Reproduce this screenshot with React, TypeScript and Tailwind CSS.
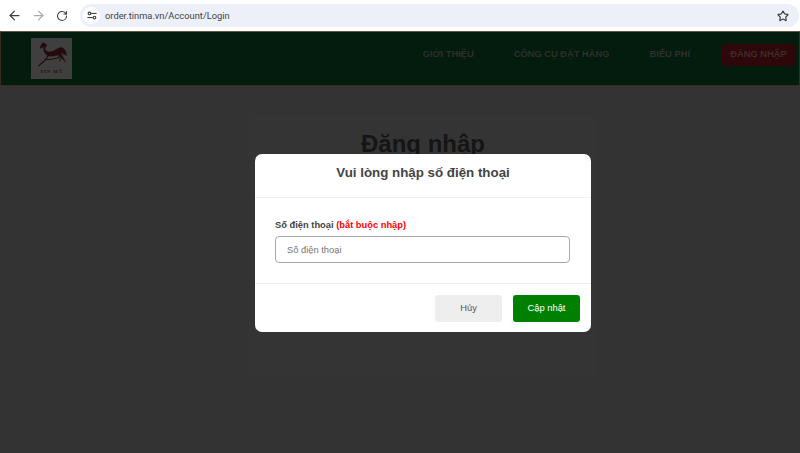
import { ArrowLeft, ArrowRight, RotateCw, Star } from "lucide-react";

function Horse() {
  return (
    <svg viewBox="0 0 30 25" className="w-[30px] h-[25px]" fill="none" stroke="#240a0e" strokeLinecap="round" strokeLinejoin="round">
      <path d="M6 0.5 L8.5 2 L10 3.5 Q8.5 4.5 8 6.5 Q8.5 9.5 12 10 Q17 9.5 20 7 Q23 4.5 26 6 Q29 8 29.5 14 L28 11.5 L27 13 Q26 10 24 11 Q24.5 13 26 15 L28.5 20 L24 15.5 L21.5 13 Q16 14.5 11 14 Q8 12.5 7 9 L6.5 5 L3 6.5 L3.5 4.5 Z" fill="#240a0e" strokeWidth="0.4" />
      <path d="M11 14 Q9 18 6 20 L1.5 24" strokeWidth="1.1" />
      <path d="M8 17.5 Q14 18.5 22 15.5" strokeWidth="1" />
      <path d="M22 14 Q24.5 16 23 19" strokeWidth="0.9" />
    </svg>
  );
}

function SiteInfo() {
  return (
    <svg viewBox="0 0 12 10" className="w-[10px] h-[9px]" fill="none" stroke="#3c4043" strokeWidth="1.3">
      <circle cx="3" cy="2.5" r="1.6" />
      <path d="M5 2.5 H11.5" />
      <circle cx="9" cy="7.5" r="1.6" />
      <path d="M0.5 7.5 H7" />
    </svg>
  );
}

export default function App() {
  return (
    <div className="relative w-[800px] h-[453px] overflow-hidden bg-[#333333] font-['Liberation_Sans',sans-serif]">
      <div className="h-[31px] bg-white flex items-center pl-[7px] pr-[1px]">
        <ArrowLeft size={15} strokeWidth={2} className="text-[#3c4043]" />
        <ArrowRight size={15} strokeWidth={2} className="text-[#a9acb0] ml-[9px]" />
        <RotateCw size={12} strokeWidth={2.2} className="text-[#3c4043] ml-[10px]" />
        <div className="ml-[12px] flex-1 h-[23px] rounded-full bg-[#edf0f9] flex items-center pl-[3px] pr-[10px]">
          <div className="w-[17px] h-[17px] rounded-full bg-white flex items-center justify-center">
            <SiteInfo />
          </div>
          <span className="ml-[5px] text-[9.33px] text-[#3f4347] font-['Roboto',sans-serif]">
            order.tinma.vn/Account/Login
          </span>
          <Star size={12} strokeWidth={2.4} className="ml-auto text-[#3c4043]" />
        </div>
      </div>

      <nav className="h-[55px] bg-[#041c0e] border border-[#3d2a1c] border-t-[#6a5443] flex items-center pl-[30px] pr-[4px]">
        <div className="w-[41px] h-[41px] bg-[#403f3f] flex flex-col items-center pt-[4px]">
          <Horse />
          <span className="mt-[2px] text-[4.6px] leading-[5px] font-bold text-[#240a0e] font-['Liberation_Serif',serif] tracking-[0.9px] whitespace-nowrap">TÍN MÃ</span>
        </div>
        <div className="ml-auto mb-[8px] flex items-center text-[9.33px] font-bold text-[#2e2f2d]">
          <span>GIỚI THIỆU</span>
          <span className="ml-[40px]">CÔNG CỤ ĐẶT HÀNG</span>
          <span className="ml-[40px]">BIỂU PHÍ</span>
          <span className="ml-[32px] w-[73px] h-[22px] rounded-[3px] bg-[#2d0709] flex items-center justify-center text-[#3c2d2e]">
            ĐĂNG NHẬP
          </span>
        </div>
      </nav>

      <main className="flex justify-center pt-[29px] pl-[46px]">
        <div className="w-[348px] h-[260px] bg-[#343434] text-center">
          <h1 className="mt-[15px] text-[24px] leading-[28px] font-bold text-[#151515]">Đăng nhập</h1>
        </div>
      </main>

      <div className="absolute left-[255px] top-[154px] w-[336px] h-[178px] rounded-[7px] bg-white flex flex-col">
        <div className="h-[44px] border-b border-[#f0f0f0] text-center pt-[9px] text-[13.33px] leading-[20px] font-bold text-[#444444]">
          Vui lòng nhập số điện thoại
        </div>
        <div className="h-[86px] border-b border-[#eeeeee] px-[20px] pt-[20px]">
          <div className="text-[9.33px] leading-[14px] font-bold text-[#444444]">
            Số điện thoại <span className="text-[#ff0000]">(bắt buộc nhập)</span>
          </div>
          <input
            readOnly
            placeholder="Số điện thoại"
            className="mt-[4px] w-[295px] h-[27px] rounded-[4px] border border-[#a8a8a8] px-[11px] text-[9.33px] placeholder:text-[#777777] outline-none"
          />
        </div>
        <div className="flex justify-end items-center gap-[11px] pr-[11px] pt-[11px]">
          <button className="w-[67px] h-[27px] rounded-[3px] bg-[#eeeeee] text-[9.33px] text-[#555555]">Hủy</button>
          <button className="w-[67px] h-[27px] rounded-[3px] bg-[#008000] text-[9.33px] text-white">Cập nhật</button>
        </div>
      </div>
    </div>
  );
}
